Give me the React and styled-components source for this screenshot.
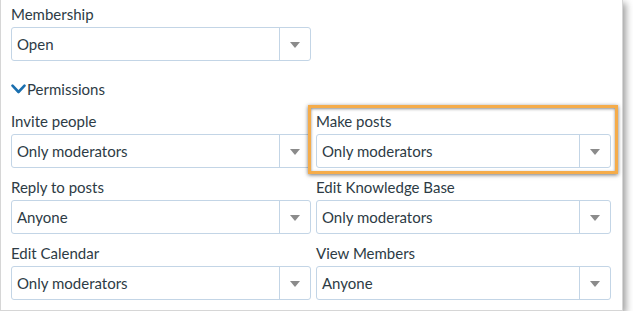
import React from "react";
import styled, { createGlobalStyle, css } from "styled-components";

const Global = createGlobalStyle`
  html, body { margin: 0; padding: 0; background: #fff; }
  body { font-family: Lato, "Open Sans", "Liberation Sans", sans-serif; }
  * { box-sizing: border-box; }
`;

const Panel = styled.div`
  width: 623px;
  height: 311px;
  background: #fff;
  border: 1px solid #d6d6d6;
  border-top: none;
  box-shadow: 3px 3px 7px rgba(0, 0, 0, 0.38);
  padding: 4px 10px 0 10px;
  color: #2d3b45;
`;

const Field = styled.div`
  position: relative;
  display: flex;
  flex-direction: column;
  ${(p) =>
    p.$highlight &&
    css`
      &::after {
        content: "";
        position: absolute;
        left: -8px;
        right: -7px;
        top: -6px;
        bottom: -6px;
        border: 3px solid #f5ac4a;
        box-shadow: 0 1px 4px rgba(0, 0, 0, 0.55), inset 0 1px 3px rgba(0, 0, 0, 0.45);
        pointer-events: none;
      }
    `}
`;

const Label = styled.label`
  font-size: 15px;
  line-height: 20px;
  height: 20px;
  margin-bottom: 3px;
  color: #2d3b45;
`;

const SelectBox = styled.div`
  display: flex;
  align-items: stretch;
  height: 34px;
  width: ${(p) => p.$width}px;
  border: 1px solid #c3d5e6;
  border-radius: 3px;
  background: #fff;
`;

const Value = styled.div`
  flex: 1;
  display: flex;
  align-items: center;
  padding-left: 5px;
  font-size: 15px;
  color: #2d3b45;
`;

const Arrow = styled.div`
  width: 31px;
  border-left: 1px solid #c3d5e6;
  display: flex;
  align-items: center;
  justify-content: center;
  &::before {
    content: "";
    width: 0;
    height: 0;
    border-left: 5px solid transparent;
    border-right: 5px solid transparent;
    border-top: 6px solid #8b8b8b;
    margin-top: 1px;
  }
`;

const SectionHeader = styled.div`
  display: flex;
  align-items: center;
  margin-top: 18px;
  height: 20px;
  font-size: 15px;
  color: #2d3b45;
  gap: 1px;
`;

const Grid = styled.div`
  display: grid;
  grid-template-columns: 300px 295px;
  column-gap: 5px;
  row-gap: 9px;
  margin-top: 12px;
`;

const Chevron = () => (
  <svg width="15" height="10" viewBox="0 0 15 10" style={{ display: "block" }}>
    <path d="M1.5 1.6 L7.5 8 L13.5 1.6" fill="none" stroke="#1a6faf" strokeWidth="2.6" strokeLinecap="round" strokeLinejoin="round" />
  </svg>
);

const Select = ({ label, value, width, highlight }) => (
  <Field $highlight={highlight}>
    <Label>{label}</Label>
    <SelectBox $width={width}>
      <Value>{value}</Value>
      <Arrow />
    </SelectBox>
  </Field>
);

const fields = [
  ["Invite people", "Only moderators"],
  ["Make posts", "Only moderators", true],
  ["Reply to posts", "Anyone"],
  ["Edit Knowledge Base", "Only moderators"],
  ["Edit Calendar", "Only moderators"],
  ["View Members", "Anyone"],
];

export default function App() {
  return (
    <>
      <Global />
      <Panel>
        <Select label="Membership" value="Open" width={300} />
        <SectionHeader>
          <Chevron />
          <span>Permissions</span>
        </SectionHeader>
        <Grid>
          {fields.map(([l, v, h], i) => (
            <Select key={l} label={l} value={v} width={i % 2 ? 295 : 300} highlight={h} />
          ))}
        </Grid>
      </Panel>
    </>
  );
}
